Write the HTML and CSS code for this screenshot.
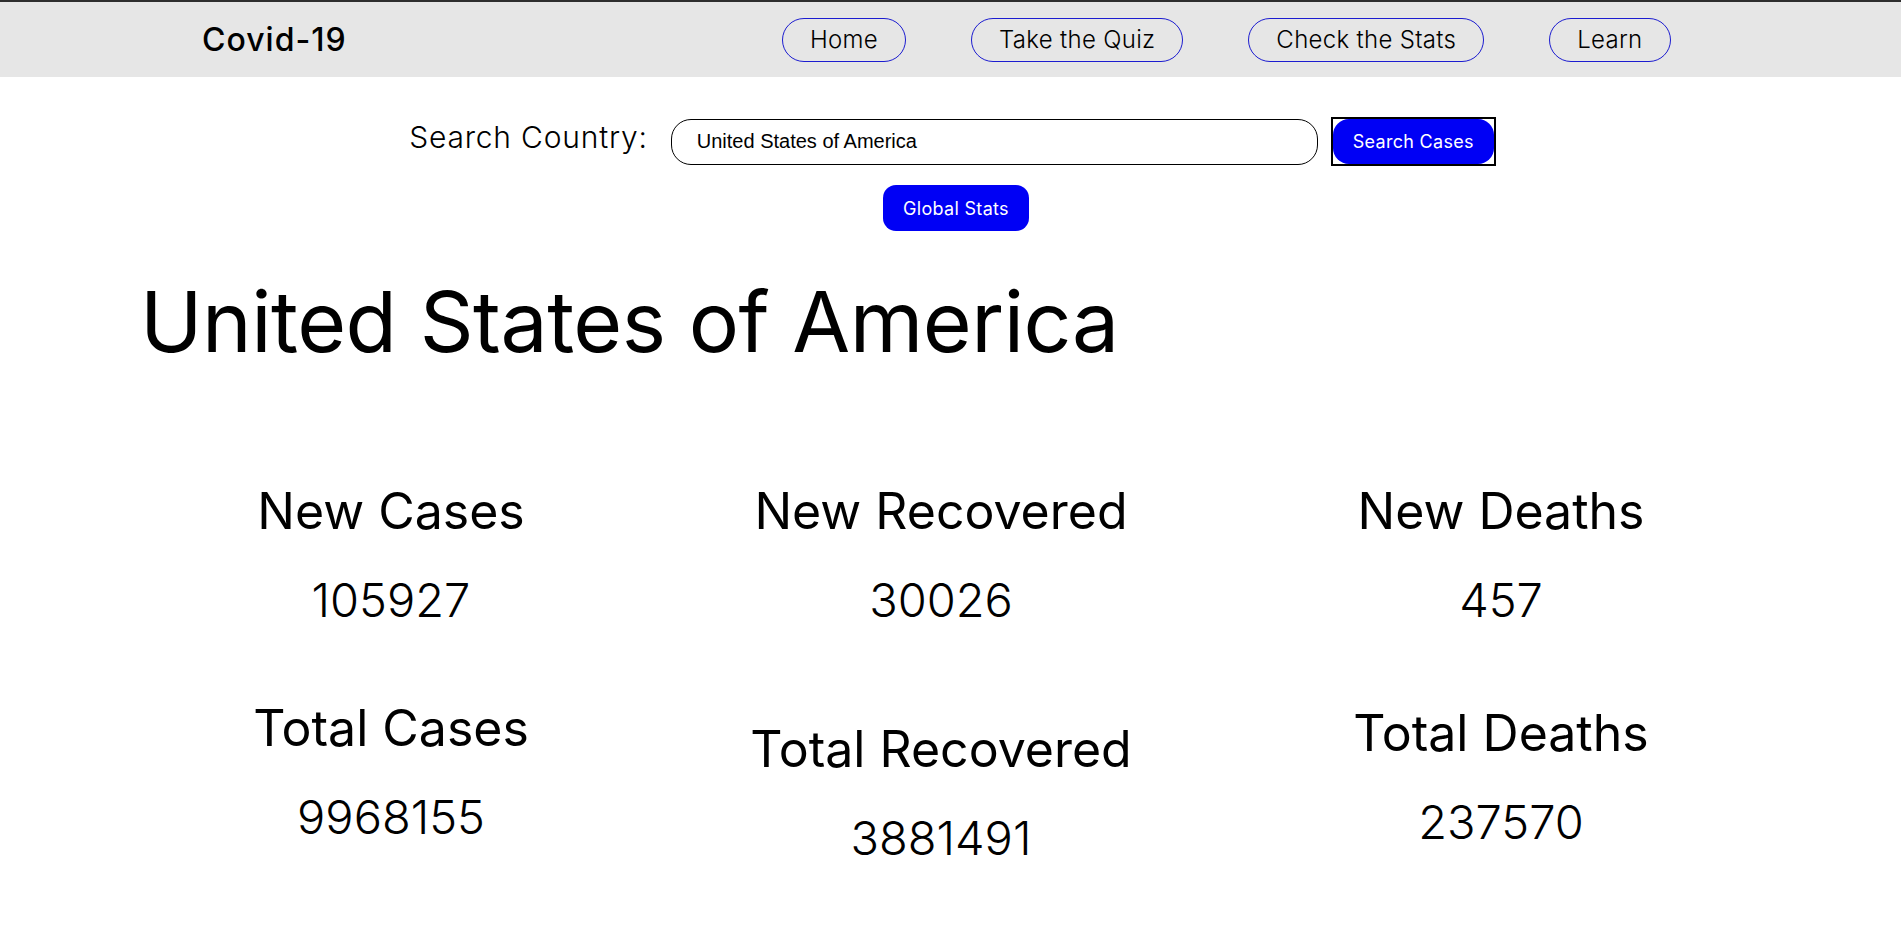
FILE: index.html
```html
<!DOCTYPE html>
<html lang="en">
<head>
<meta charset="utf-8">
<title>Covid-19</title>
<link rel="stylesheet" href="styles.css">
</head>
<body>
<header class="nav">
  <div class="brand">Covid-19</div>
  <nav class="links">
    <a class="pill" href="#">Home</a>
    <a class="pill" href="#">Take the Quiz</a>
    <a class="pill" href="#">Check the Stats</a>
    <a class="pill" href="#">Learn</a>
  </nav>
</header>
<main>
  <section class="search">
    <div class="search-row">
      <label class="search-label" for="country">Search Country:</label>
      <input class="search-input" id="country" type="text" value="United States of America">
      <span class="focus-ring"><button class="btn btn-search">Search Cases</button></span>
    </div>
    <button class="btn btn-global">Global Stats</button>
  </section>
  <h1 class="country">United States of America</h1>
  <section class="stats">
    <div class="stat">
      <h2 class="stat-title">New Cases</h2>
      <p class="stat-value">105927</p>
    </div>
    <div class="stat">
      <h2 class="stat-title">New Recovered</h2>
      <p class="stat-value">30026</p>
    </div>
    <div class="stat">
      <h2 class="stat-title">New Deaths</h2>
      <p class="stat-value">457</p>
    </div>
    <div class="stat">
      <h2 class="stat-title">Total Cases</h2>
      <p class="stat-value">9968155</p>
    </div>
    <div class="stat stat-low">
      <h2 class="stat-title">Total Recovered</h2>
      <p class="stat-value">3881491</p>
    </div>
    <div class="stat stat-mid">
      <h2 class="stat-title">Total Deaths</h2>
      <p class="stat-value">237570</p>
    </div>
  </section>
</main>
</body>
</html>
```
FILE: styles.css
```css
* { box-sizing: border-box; }
html, body { margin: 0; padding: 0; background: #fff; }
body {
  font-family: Inter, "Noto Sans", sans-serif;
  color: #000;
}
.nav {
  height: 77px;
  border-top: 2px solid #2e2e2e;
  background: #e6e6e6;
  display: flex;
  align-items: center;
  padding-left: 202px;
}
.brand {
  font-size: 32px;
  font-weight: 500;
  letter-spacing: 1px;
  width: 580px;
}
.links {
  display: flex;
  gap: 65px;
}
.pill {
  display: inline-block;
  height: 44px;
  line-height: 42px;
  padding: 0 27px;
  border: 1px solid #1c1cd0;
  border-radius: 22px;
  font-size: 24px;
  font-weight: 300;
  letter-spacing: 0.3px;
  color: #000;
  text-decoration: none;
}
.search {
  display: flex;
  flex-direction: column;
  align-items: center;
  padding-top: 40px;
}
.search-row {
  display: flex;
  align-items: baseline;
  margin-left: 4px;
}
.search-label {
  font-size: 30px;
  font-weight: 300;
  letter-spacing: 0.8px;
  margin-right: 23px;
}
.search-input {
  width: 647px;
  height: 46px;
  border: 1px solid #000;
  border-radius: 20px;
  padding: 0 25px;
  font-family: "Liberation Sans", Arial, sans-serif;
  font-size: 20px;
  color: #000;
  outline: none;
}
.focus-ring {
  display: inline-flex;
  margin-left: 13px;
  border: 2px solid #000;
}
.btn {
  font-family: Inter, "Noto Sans", sans-serif;
  background: #0000f5;
  color: #fff;
  border: none;
  font-size: 18px;
  font-weight: 400;
  letter-spacing: 0.3px;
  cursor: pointer;
}
.btn-search {
  width: 161px;
  height: 45px;
  border-radius: 16px;
}
.btn-global {
  margin-top: 19px;
  margin-left: 11px;
  width: 146px;
  height: 46px;
  border-radius: 13px;
}
.country {
  margin: 48px 0 0 140px;
  font-size: 84px;
  font-weight: 400;
  line-height: 86px;
  letter-spacing: -0.5px;
}
.stats {
  display: grid;
  grid-template-columns: 550px 550px 570px;
  margin: 0 0 0 116px;
  padding-top: 113px;
  row-gap: 65px;
}
.stat {
  text-align: center;
}
.stat-title {
  margin: 0;
  font-size: 50px;
  font-weight: 400;
  line-height: 66px;
}
.stat-value {
  margin: 26px 0 0;
  font-size: 47px;
  font-weight: 300;
  line-height: 60px;
}
.stat-low { padding-top: 21px; }
.stat-mid { padding-top: 5px; }
```
